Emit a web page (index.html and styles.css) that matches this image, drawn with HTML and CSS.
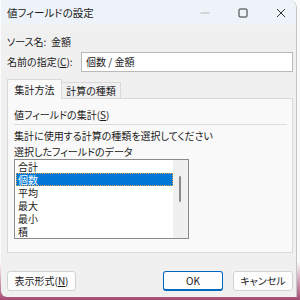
FILE: index.html
```html
<!DOCTYPE html>
<html lang="ja">
<head>
  <meta charset="UTF-8" />
  <title>値フィールドの設定</title>
  <link rel="stylesheet" href="styles.css">
</head>
<body>
  <div class="window">
    <div class="titlebar">
      <span class="title">値フィールドの設定</span>
      <div class="controls">
        <span class="ctl">
          <svg width="10" height="10" viewBox="0 0 10 10"><path d="M0.5 5h9" stroke="#b4b4b4" stroke-width="1"/></svg>
        </span>
        <span class="ctl">
          <svg width="10" height="10" viewBox="0 0 10 10"><rect x="1" y="1" width="8" height="8" rx="1" fill="none" stroke="#333" stroke-width="1"/></svg>
        </span>
        <span class="ctl">
          <svg width="10" height="10" viewBox="0 0 10 10"><path d="M1 1l8 8M9 1l-8 8" stroke="#333" stroke-width="1"/></svg>
        </span>
      </div>
    </div>

    <div class="content">
      <div class="row source">
        <span class="label">ソース名:</span>
        <span>金額</span>
      </div>
      <div class="row name">
        <span class="label">名前の指定(<u>C</u>):</span>
        <div class="input">個数 / 金額</div>
      </div>

      <div class="tabs">
        <div class="tab active">集計方法</div>
        <div class="tab">計算の種類</div>
      </div>
      <div class="panel">
        <div class="group-title">値フィールドの集計(<u>S</u>)</div>
        <div class="sep"></div>
        <div class="line">集計に使用する計算の種類を選択してください</div>
        <div class="line">選択したフィールドのデータ</div>
        <div class="listbox">
          <div class="items">
            <div class="item">合計</div>
            <div class="item selected">個数</div>
            <div class="item">平均</div>
            <div class="item">最大</div>
            <div class="item">最小</div>
            <div class="item">積</div>
          </div>
          <div class="scrollbar"><div class="thumb"></div></div>
        </div>
      </div>

      <div class="buttons">
        <div class="btn format">表示形式(<u>N</u>)</div>
        <div class="spacer"></div>
        <div class="btn ok">OK</div>
        <div class="btn cancel">キャンセル</div>
      </div>
    </div>
  </div>
</body>
</html>
```

FILE: styles.css
```css
body {
  margin: 0;
  width: 300px;
  height: 300px;
  overflow: hidden;
  background: linear-gradient(to bottom, #fbfbfb 0, #fbfbfb 262px, #a54a72 300px);
  font-family: "Noto Sans CJK JP", "Noto Sans", sans-serif;
  font-feature-settings: "palt";
  font-size: 10px;
  color: #1a1a1a;
}
.window {
  width: 295px;
  height: 297px;
  margin-left: 1px;
  background: #f0f0f0;
  border-right: 1px solid #c4c4c4;
  border-radius: 0 8px 0 6px;
  overflow: hidden;
  display: flex;
  flex-direction: column;
}
.titlebar {
  height: 25px;
  background: #eef3f9;
  display: flex;
  align-items: center;
  padding-left: 6px;
  flex-shrink: 0;
}
.title {
  flex: 1;
  font-size: 10.5px;
  line-height: 14px;
  padding-top: 1px;
}
.controls {
  display: flex;
  margin-right: -4px;
}
.ctl {
  width: 38px;
  height: 25px;
  display: flex;
  align-items: center;
  justify-content: center;
}
.content {
  flex: 1;
  display: flex;
  flex-direction: column;
  padding: 10px 3px 0 6px;
}
.row {
  display: flex;
  align-items: center;
  line-height: 14px;
}
.source .label {
  width: 44px;
}
.name {
  margin-top: 3px;
}
.name .label {
  width: 74px;
}
.input {
  flex: 1;
  height: 18px;
  line-height: 18px;
  background: #fff;
  border: 1px solid #b9b9b9;
  padding-left: 4px;
}
.tabs {
  display: flex;
  align-items: flex-end;
  margin-top: 7px;
  height: 19px;
}
.tab {
  height: 16px;
  line-height: 16px;
  background: #f0f0f0;
  border: 1px solid #d9d9d9;
  border-bottom: none;
  border-left: none;
  box-sizing: border-box;
  width: 59px;
  text-align: center;
  white-space: nowrap;
}
.tab.active {
  width: 55px;
  height: 20px;
  line-height: 19px;
  background: #f9f9f9;
  border-left: 1px solid #d9d9d9;
  margin-bottom: -1px;
  position: relative;
  z-index: 1;
}
.panel {
  height: 155px;
  width: 286px;
  box-sizing: border-box;
  background: #f9f9f9;
  border: 1px solid #d9d9d9;
  padding: 9px 5px 0 6px;
  line-height: 14px;
}
.sep {
  height: 1px;
  background: #dcdcdc;
  margin: 2px 0 4px;
}
.line {
  margin-bottom: 2px;
}
.line + .listbox {
  margin-top: -2px;
}
.listbox {
  width: 175px;
  height: 80px;
  box-sizing: border-box;
  background: #fff;
  border: 1px solid #8a8a8a;
  display: flex;
  overflow: hidden;
}
.items {
  flex: 1;
  padding-left: 1px;
}
.item {
  height: 13px;
  line-height: 13px;
  padding-left: 2px;
}
.item.selected {
  background: #0078d7;
  color: #fff;
  outline: 1px dotted #e0a050;
  outline-offset: -1px;
}
.scrollbar {
  width: 15px;
  background: #f0f0f0;
  position: relative;
}
.thumb {
  position: absolute;
  left: 6px;
  top: 16px;
  width: 2px;
  height: 26px;
  background: #8a8a8a;
  border-radius: 1px;
}
.buttons {
  display: flex;
  margin-top: 18px;
  gap: 10px;
}
.spacer {
  flex: 1;
}
.btn {
  height: 20px;
  box-sizing: border-box;
  line-height: 18px;
  text-align: center;
  background: #fdfdfd;
  border: 1px solid #d2d2d2;
  border-radius: 3px;
}
.format {
  width: 69px;
}
.ok {
  width: 60px;
  border-color: #0067c0;
  border-bottom-width: 2px;
}
.cancel {
  width: 60px;
}
```
